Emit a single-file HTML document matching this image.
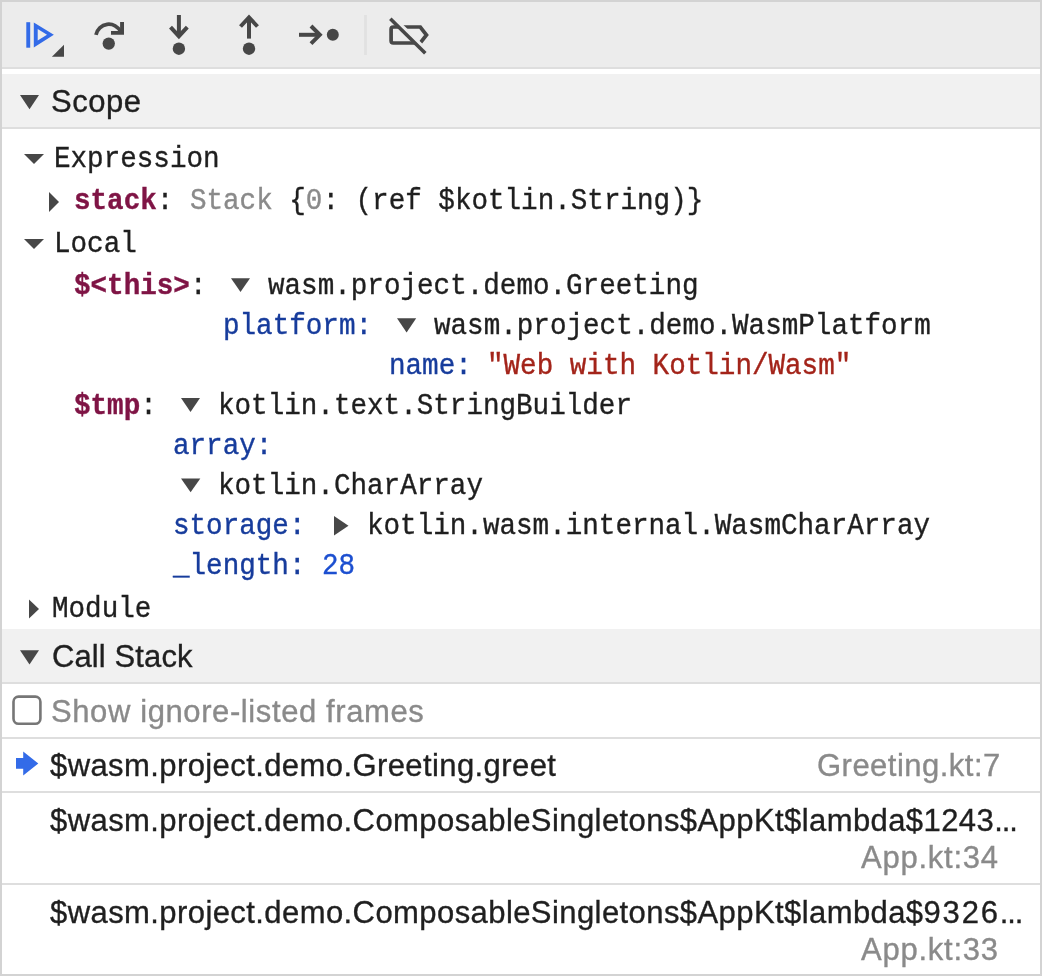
<!DOCTYPE html>
<html><head><meta charset="utf-8">
<style>
html,body{margin:0;padding:0;width:1042px;height:976px;overflow:hidden;background:#fff}
#frame{position:absolute;left:0;top:0;width:1038px;height:972px;border:2px solid #d3d3d3;background:#fff}
.bg{position:absolute;left:2px;width:1038px}
.m{position:absolute;font-family:"Liberation Mono",monospace;font-size:27.6px;line-height:40px;white-space:pre;color:#1f1f1f;will-change:transform;-webkit-text-stroke:0.35px currentColor;transform:scaleY(1.08);transform-origin:0 27px}
.s{position:absolute;font-family:"Liberation Sans",sans-serif;font-size:31px;line-height:40px;white-space:pre;color:#1f1f1f;will-change:transform;-webkit-text-stroke:0.35px currentColor}
.el{letter-spacing:-1.05px}
.nm{color:#7f1445;font-weight:bold}
.pr{color:#173c9c}
.gy{color:#8a8a8a}
.st{color:#a3241a}
.nu{color:#1c4fd0}
svg{position:absolute;left:0;top:0}
</style></head><body>
<div id="frame"></div>
<!-- toolbar -->
<div class="bg" style="top:2px;height:65px;background:#ececec"></div>
<div class="bg" style="top:67px;height:2px;background:#dedede"></div>
<!-- scope header -->
<div class="bg" style="top:74px;height:53px;background:#f1f1f1"></div>
<div class="bg" style="top:127px;height:2px;background:#dedede"></div>
<!-- call stack header -->
<div class="bg" style="top:629px;height:53px;background:#f1f1f1"></div>
<div class="bg" style="top:682px;height:2px;background:#dedede"></div>
<div class="bg" style="top:737px;height:2px;background:#dedede"></div>
<div class="bg" style="top:791px;height:2px;background:#dedede"></div>
<div class="bg" style="top:883px;height:2px;background:#dedede"></div>

<svg width="1042" height="976" viewBox="0 0 1042 976">
  <!-- resume -->
  <rect x="26.3" y="22.2" width="3.9" height="25.5" fill="#336be8"/>
  <path fill="#336be8" fill-rule="evenodd" d="M33.8,22.4 L53.85,34.8 L33.8,47.4 Z M37.7,29 L37.7,40.5 L47,34.75 Z"/>
  <path fill="#474747" d="M64,44.7 L64,56.8 L51.9,56.8 Z"/>
  <!-- step over -->
  <g fill="none" stroke="#474747" stroke-width="4">
    <path d="M95.96,34.9 A13.08,13.08 0 0 1 120.65,31.7" stroke-width="3.7"/>
    <path d="M178.9,15 V37"/>
    <path d="M170.5,27.2 L178.9,36.2 L187.3,27.2"/>
    <path d="M249,17.5 V38.6"/>
    <path d="M240.5,26.5 L249,17.5 L257.5,26.5"/>
    <path d="M299,34.8 H320"/>
    <path d="M311,26 L319.8,34.8 L311,43.6"/>
  </g>
  <g fill="#474747">
    <path d="M120.1,22 H124 V34.8 H111 V31 H120.1 Z"/>
    <circle cx="108.75" cy="43.55" r="6.15"/>
    <circle cx="178.9" cy="48.7" r="6.2"/>
    <circle cx="249" cy="48.7" r="6.2"/>
    <circle cx="332.8" cy="34.8" r="6"/>
  </g>
  <rect x="364.1" y="15" width="2.8" height="40" fill="#e1e1e1"/>
  <path d="M393.3,27 H420.3 L426.5,35 L420.3,43 H393.3 Q391.1,43 391.1,40.8 V29.2 Q391.1,27 393.3,27 Z" fill="none" stroke="#474747" stroke-width="3.7"/>
  <path d="M386.28,11.47 L427.58,52.19" fill="none" stroke="#ececec" stroke-width="4.9"/>
  <path d="M390.3,18.8 L425.3,53.3" fill="none" stroke="#474747" stroke-width="3.6"/>
  <!-- tree triangles -->
  <g fill="#474747">
    <path d="M20,95 H39 L29.5,109.3 Z"/>
    <path d="M24,154 H44 L34,164 Z"/>
    <path d="M49,192 L59,202 L49,212 Z"/>
    <path d="M24,239 H44 L34,249 Z"/>
    <path d="M231,278.2 H250 L240.5,292 Z"/>
    <path d="M397,318.2 H416.2 L406.6,332.6 Z"/>
    <path d="M181,398 H200 L190.5,412 Z"/>
    <path d="M181,478.4 H200.3 L190.6,492.2 Z"/>
    <path d="M334,516 L348.5,525.75 L334,535.5 Z"/>
    <path d="M29,599.4 L39,609 L29,618.6 Z"/>
    <path d="M20,650.2 H39 L29.5,664.5 Z"/>
  </g>
  <!-- checkbox -->
  <rect x="13.5" y="696.65" width="26.9" height="27.1" rx="5" fill="none" stroke="#767676" stroke-width="2.6"/>
  <!-- call frame arrow -->
  <path fill="#336be8" d="M16,758 H23.2 V751.6 L38.3,763.5 L23.2,775.4 V768.7 H16 Z"/>
</svg>


<div class="m" style="left:54px;top:140px">Expression</div>
<div class="m" style="left:74px;top:182px"><span class="nm">stack</span>: <span class="gy">Stack</span> {<span class="gy">0</span>: (ref $kotlin.String)}</div>
<div class="m" style="left:54px;top:225px">Local</div>
<div class="m" style="left:74px;top:267px"><span class="nm">$&lt;this&gt;</span>:</div>
<div class="m" style="left:268px;top:267px">wasm.project.demo.Greeting</div>
<div class="m pr" style="left:223px;top:307px">platform:</div>
<div class="m" style="left:434px;top:307px">wasm.project.demo.WasmPlatform</div>
<div class="m pr" style="left:388.5px;top:347px">name:</div>
<div class="m st" style="left:487px;top:347px">"Web with Kotlin/Wasm"</div>
<div class="m" style="left:74px;top:387px"><span class="nm">$tmp</span>:</div>
<div class="m" style="left:218px;top:387px">kotlin.text.StringBuilder</div>
<div class="m pr" style="left:173px;top:427px">array:</div>
<div class="m" style="left:218px;top:467px">kotlin.CharArray</div>
<div class="m pr" style="left:173px;top:507px">storage:</div>
<div class="m" style="left:367px;top:507px">kotlin.wasm.internal.WasmCharArray</div>
<div class="m pr" style="left:173px;top:547px">_length: <span class="nu">28</span></div>
<div class="m" style="left:52px;top:590px">Module</div>

<div class="s" style="left:51px;top:82px;letter-spacing:0.5px">Scope</div>
<div class="s" style="left:52px;top:637px;letter-spacing:0.11px">Call Stack</div>
<div class="s gy" style="left:51px;top:692px;letter-spacing:0.6px">Show ignore-listed frames</div>
<div class="s" style="left:50px;top:746px;letter-spacing:0.41px">$wasm.project.demo.Greeting.greet</div>
<div class="s gy" style="right:41px;top:746px;letter-spacing:0.48px">Greeting.kt:7</div>
<div class="s" style="left:50px;top:801px;letter-spacing:0.42px">$wasm.project.demo.ComposableSingletons$AppKt$lambda$1243<span class="el">...</span></div>
<div class="s gy" style="right:43px;top:838px;letter-spacing:0.76px">App.kt:34</div>
<div class="s" style="left:50px;top:893px;letter-spacing:0.42px">$wasm.project.demo.ComposableSingletons$AppKt$lambda$<span style="letter-spacing:1.8px">9326</span><span class="el">...</span></div>
<div class="s gy" style="right:43px;top:930px;letter-spacing:0.76px">App.kt:33</div>
</body></html>
